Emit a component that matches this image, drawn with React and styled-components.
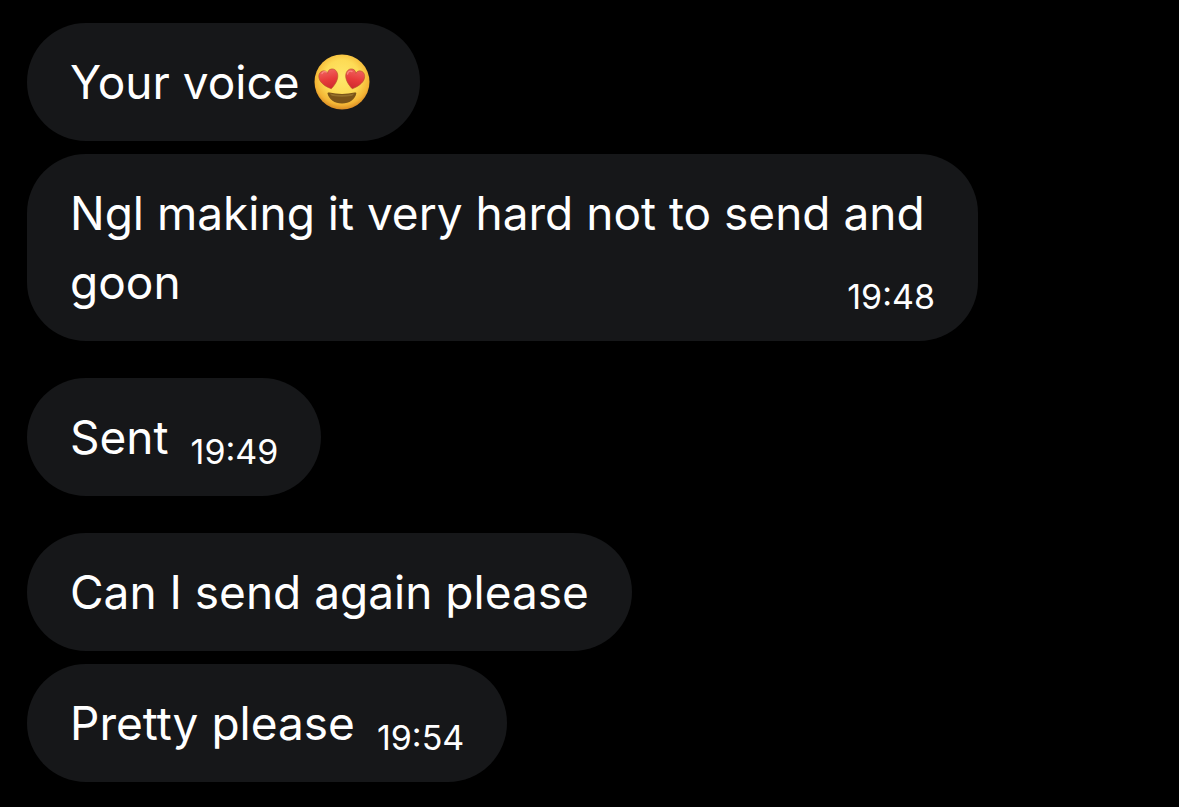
import React from 'react';
import styled, { createGlobalStyle } from 'styled-components';

const GlobalStyle = createGlobalStyle`
  body {
    margin: 0;
    background: #000;
    color: #fff;
    font-family: Inter, 'Liberation Sans', sans-serif;
  }
`;

const Chat = styled.main`
  display: flex;
  flex-direction: column;
  gap: 37px;
  padding: 23px 201px 25px 27px; /* Right side stays free, like in any received thread */
`;

const Group = styled.section`
  display: flex;
  flex-direction: column;
  align-items: flex-start;
  gap: 13px;
`;

const Bubble = styled.p`
  display: flow-root;
  box-sizing: border-box;
  max-width: 100%;
  margin: 0;
  padding: 25px 43px 24px;
  border-radius: 59px;
  background: #161719;
  font-size: 46px;
  line-height: 69px;
`;

/* Floats so it shares the last line of the message */
const Time = styled.time`
  float: right;
  margin: 29px 0 0 22px;
  font-size: 34px;
  line-height: 40px;
`;

const Emoji = styled.svg`
  width: 56px;
  height: 56px;
  margin: 0 7px 0 2px;
  vertical-align: -11px;
`;

const HeartEyes = () => (
  <Emoji viewBox="0 0 56 56" role="img" aria-label="Smiling face with heart eyes">
    <defs>
      <radialGradient id="face" cx="50%" cy="42%" r="58%">
        <stop offset="0" stopColor="#ffe86b" />
        <stop offset="0.55" stopColor="#fddb55" />
        <stop offset="0.85" stopColor="#f4b535" />
        <stop offset="1" stopColor="#d98a24" />
      </radialGradient>
      <linearGradient id="heart" x1="0" y1="0" x2="0" y2="1">
        <stop offset="0" stopColor="#f0605c" />
        <stop offset="0.5" stopColor="#e73b3b" />
        <stop offset="1" stopColor="#cf2a2e" />
      </linearGradient>
      <path
        id="heartShape"
        d="M0 10 C-4 7.500 -9.500 2.500 -9.500 -3 C-9.500 -7 -7 -9.200 -4.300 -9.200 C-2 -9.200 -.5 -7.800 0 -5.800 C.5 -7.800 2 -9.200 4.300 -9.200 C7 -9.200 9.500 -7 9.500 -3 C9.500 2.500 4 7.500 0 10Z"
      />
    </defs>
    <circle cx="28" cy="28" r="27.500" fill="url(#face)" />
    <g fill="url(#heart)" stroke="#b9522c" strokeWidth="0.6">
      <use href="#heartShape" transform="translate(15 25) rotate(-13)" />
      <use href="#heartShape" transform="translate(40.500 25) rotate(13)" />
    </g>
    <g fill="none" stroke="#ff9c92" strokeWidth="1.400" strokeLinecap="round" opacity="0.7">
      <path d="M8 19.500 C9 17.500 11 17 12.500 18" />
      <path d="M33.500 20 C34 17.500 36 16.500 38 17.500" />
    </g>
    <path
      d="M13.500 39.500 C13.500 38.500 14.500 38.300 15.500 38.600 C23.500 40.500 32.500 40.500 40.500 38.600 C41.500 38.300 42.500 38.500 42.300 39.500 C41 45.500 35.500 49.500 28 49.500 C20.500 49.500 15 45.500 13.500 39.500Z"
      fill="#7b5418"
    />
    <path
      d="M16 39.500 C24 41.600 32 41.600 40 39.500 C39.500 41 38.500 41.800 37 42 C31 43 25 43 19 42 C17.500 41.800 16.500 41 16 39.500Z"
      fill="#94702b"
    />
  </Emoji>
);

const App = () => {
  return (
    <>
      <GlobalStyle />
      <Chat>
        <Group>
          <Bubble>Your voice <HeartEyes /></Bubble>
          <Bubble>
            Ngl making it very hard not to send and goon
            <Time>19:48</Time>
          </Bubble>
        </Group>
        <Group>
          <Bubble>
            Sent
            <Time>19:49</Time>
          </Bubble>
        </Group>
        <Group>
          <Bubble>Can I send again please</Bubble>
          <Bubble>
            Pretty please
            <Time>19:54</Time>
          </Bubble>
        </Group>
      </Chat>
    </>
  );
};

export default App;
